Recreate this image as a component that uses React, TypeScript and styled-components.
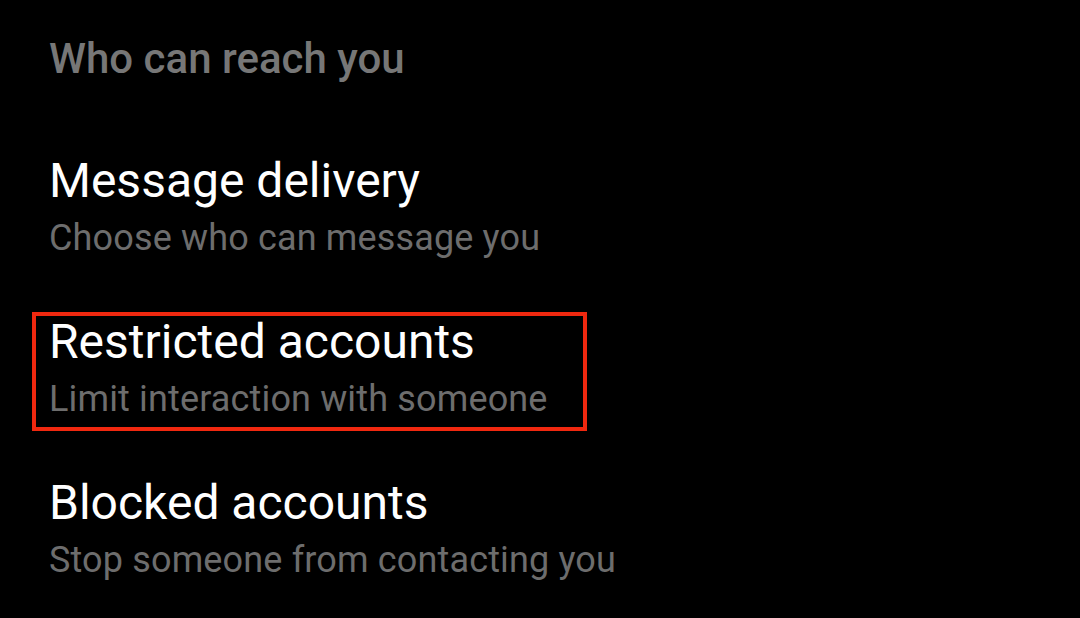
import React from "react";
import styled, { createGlobalStyle } from "styled-components";

const GlobalStyle = createGlobalStyle`
  html, body {
    margin: 0;
    padding: 0;
    background: #000;
  }
  body {
    font-family: Roboto, "Noto Sans", sans-serif;
    -webkit-font-smoothing: antialiased;
  }
`;

const Screen = styled.div`
  width: 1080px;
  height: 618px;
  background: #000;
  overflow: hidden;
  padding: 0 0 0 49px;
  box-sizing: border-box;
`;

const SectionHeader = styled.h2`
  margin: 0 0 29px;
  padding-top: 34px;
  font-size: 42px;
  font-weight: 500;
  line-height: 50px;
  color: #777777;
`;

const Row = styled.div<{ $highlighted?: boolean }>`
  position: relative;
  display: flex;
  flex-direction: column;
  width: fit-content;
  height: 161px;
  padding-top: 40px;
  box-sizing: border-box;

  /* red annotation frame drawn over the row */
  &::after {
    content: "";
    display: ${(p) => (p.$highlighted ? "block" : "none")};
    position: absolute;
    left: -17px;
    right: -39px;
    top: 38px;
    height: 119px;
    border: 4px solid #f0280f;
    box-sizing: border-box;
  }
`;

const Title = styled.div`
  font-size: 48px;
  line-height: 56px;
  color: #ffffff;
`;

const Subtitle = styled.div`
  margin-top: 7px;
  font-size: 36px;
  line-height: 44px;
  letter-spacing: 0.15px;
  color: #6d6d6d;
`;

interface Item {
  title: string;
  subtitle: string;
  highlighted?: boolean;
}

const items: Item[] = [
  { title: "Message delivery", subtitle: "Choose who can message you" },
  { title: "Restricted accounts", subtitle: "Limit interaction with someone", highlighted: true },
  { title: "Blocked accounts", subtitle: "Stop someone from contacting you" },
];

export default function App() {
  return (
    <>
      <GlobalStyle />
      <Screen>
        <SectionHeader>Who can reach you</SectionHeader>
        {items.map((item) => (
          <Row key={item.title} $highlighted={item.highlighted}>
            <Title>{item.title}</Title>
            <Subtitle>{item.subtitle}</Subtitle>
          </Row>
        ))}
      </Screen>
    </>
  );
}
